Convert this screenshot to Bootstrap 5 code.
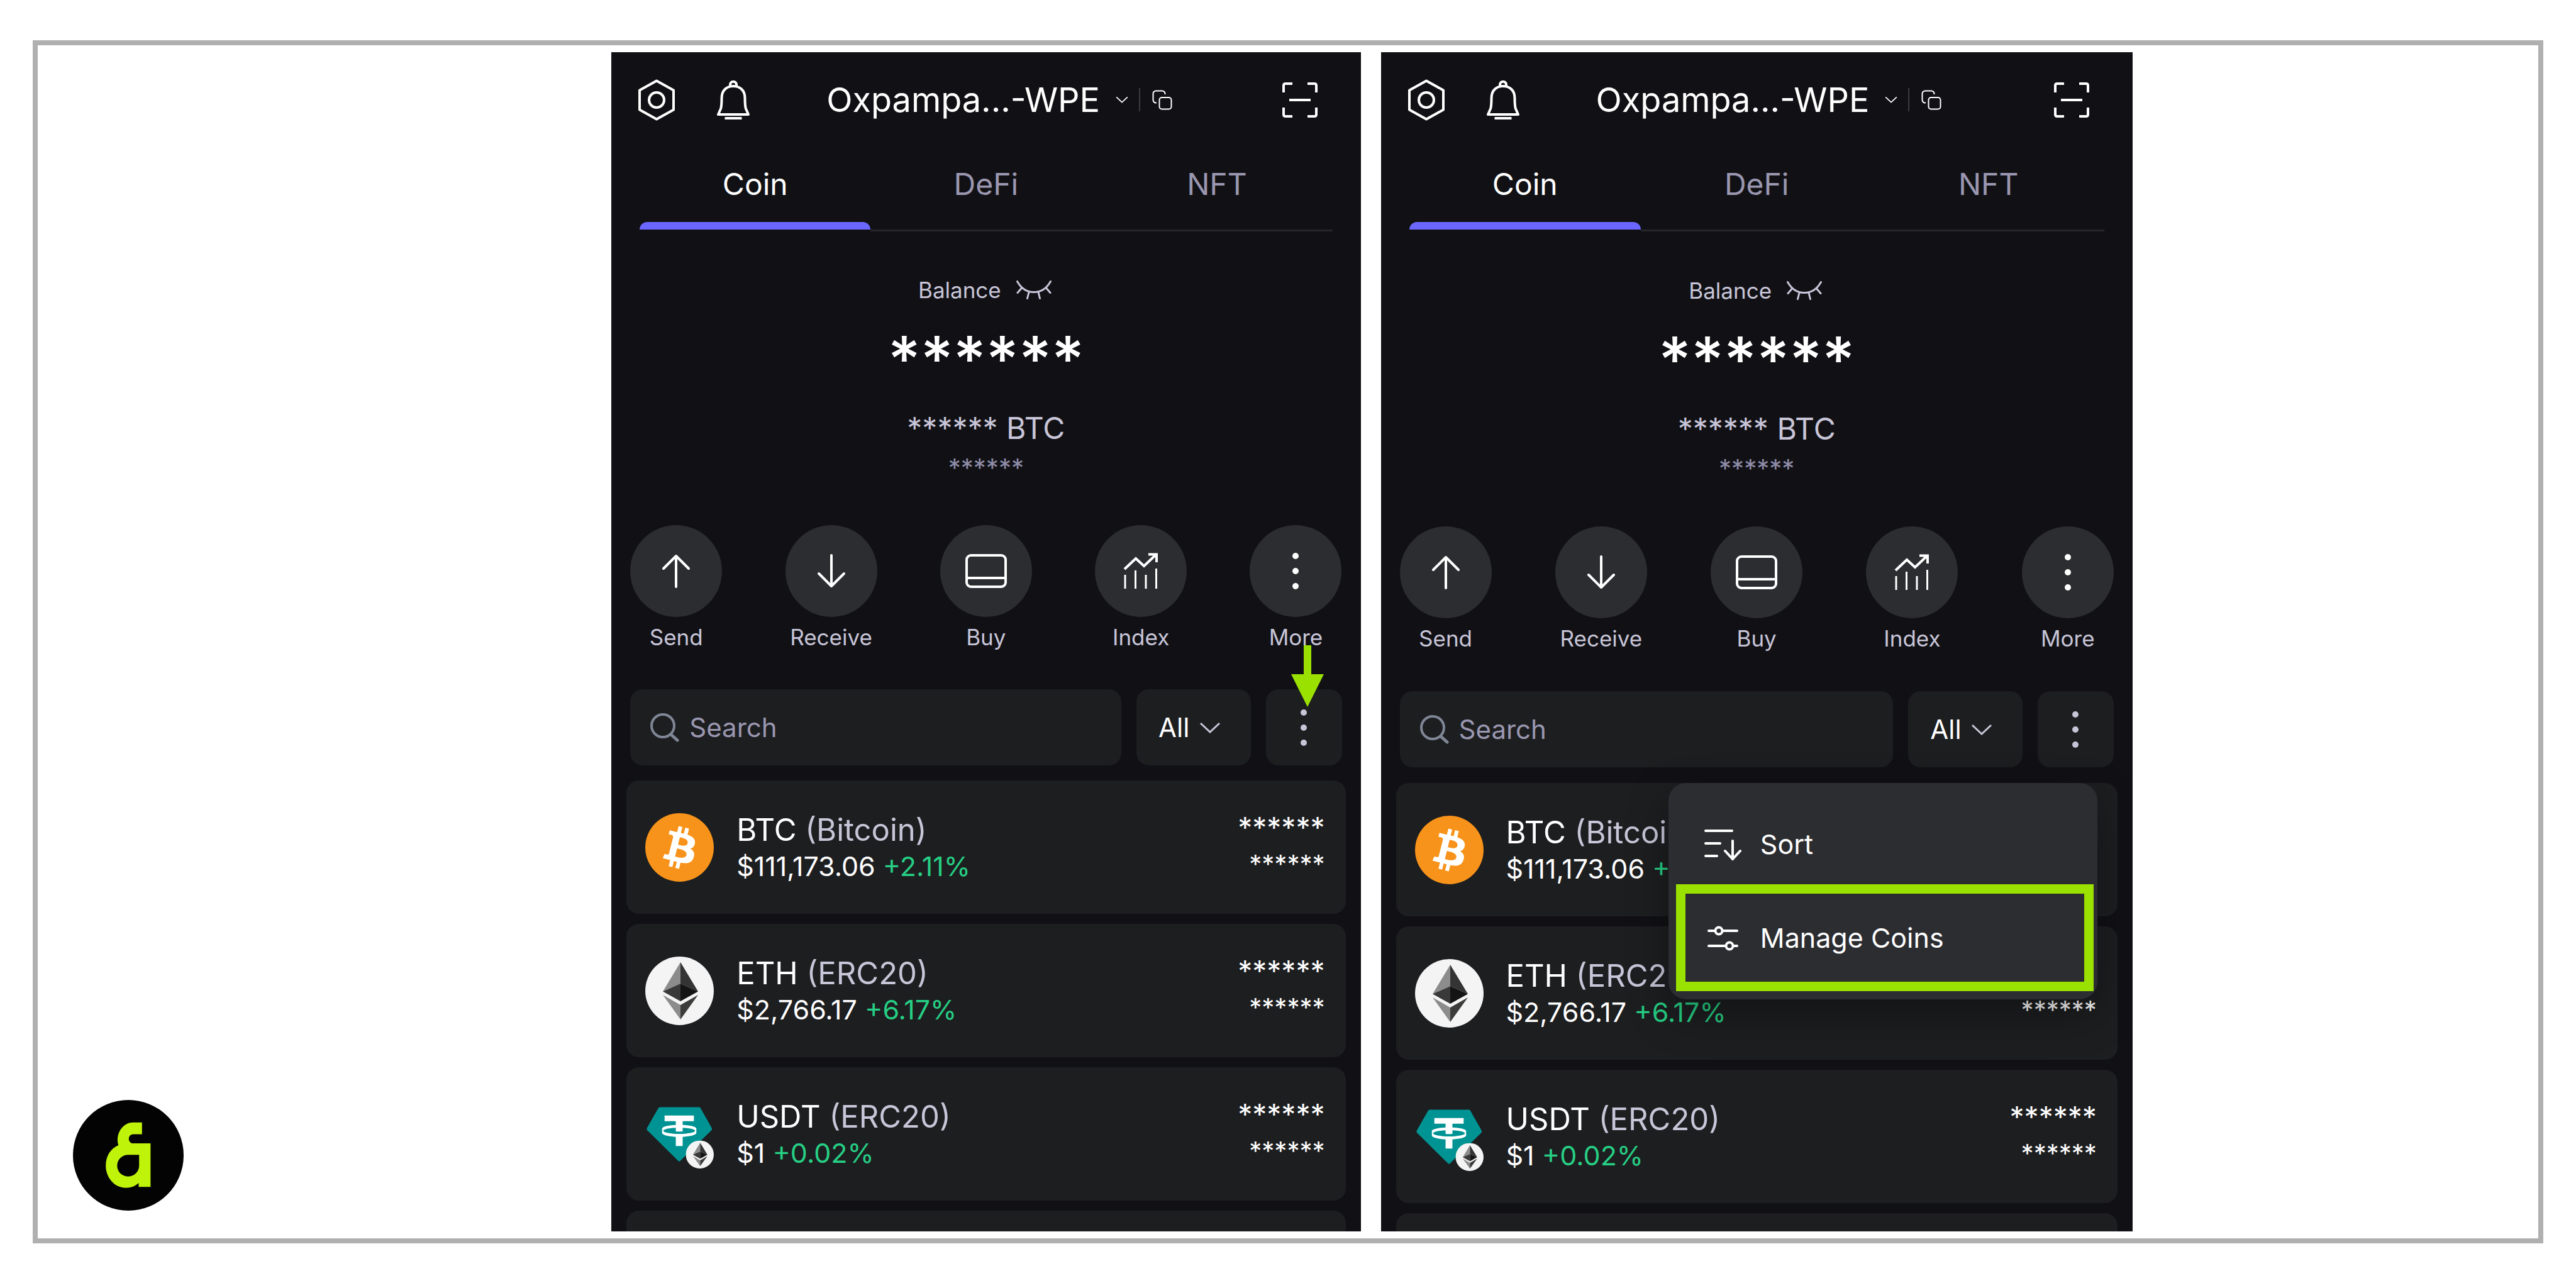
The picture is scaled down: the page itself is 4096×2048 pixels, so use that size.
<!DOCTYPE html>
<html lang="en">
<head>
<meta charset="utf-8">
<meta name="viewport" content="width=device-width, initial-scale=1">
<title>Wallet: manage coins</title>
<link href="https://cdn.jsdelivr.net/npm/bootstrap@5.3.0/dist/css/bootstrap.min.css" rel="stylesheet">
<style>
  body { background: #fff; font-family: Inter, "Liberation Sans", sans-serif; }
  svg { display: block; flex: none; fill: none; stroke: currentColor; stroke-width: 3; }
  .page { height: 100vh; padding: 64px 52px 71px; }
  .sheet { height: 100%; border: 8px solid #b0b0b0; padding: 11px 0; display: grid; grid-template-columns: 912fr 1191fr 32fr 1195fr 645fr; grid-template-rows: minmax(0, 1fr); }
  .brand { padding: 0 0 33px 56px; }
  .phone { --nudge: 0px; background: #111115; color: #fff; overflow: hidden; min-width: 0; }
  .phone-b { --nudge: 1px; grid-column: 4; }
  .phone button, .phone select, .phone input { background: none; border: 0; padding: 0; color: inherit; font-family: inherit; }
  .phone a { color: inherit; text-decoration: none; }

  .top-row { height: 151px; padding: 0 69px 0 42px; }
  .bell { margin-left: 66px; }
  .account { margin-left: 122px; gap: 25px; font-size: 54px; line-height: 64px; }
  .account-sep { width: 2px; height: 37px; background: #3a3b3f; margin: 0 -6px 0 -8px; }

  .tab-row { padding: 0 45px; font-size: 48px; line-height: 58px; }
  .tab-row a { flex: 1 1 0; text-align: center; padding: 30px 0 43px; border-bottom: 3px solid #26272b; color: #9a97b0; position: relative; }
  .tab-row a.active { color: #fff; border-color: transparent; }
  .tab-row a.active::after { content: ""; position: absolute; left: 0; right: 0; bottom: 0; height: 12px; border-radius: 12px 12px 0 0; background: #6b66ff; }

  .balance { padding-top: calc(72px + var(--nudge)); color: #c8c5d8; }
  .balance-label { gap: 24px; padding-right: 4px; font-size: 35px; line-height: 42px; }
  .total { margin-top: 26px; font-size: 100px; line-height: 126px; font-weight: 500; color: #fff; }
  .in-btc { margin-top: 18px; font-size: 48px; line-height: 58px; }
  .change { margin-top: 8px; font-size: 40px; line-height: 51px; color: #8f8ca8; }

  .actions { padding: calc(66px + var(--nudge)) 30px 0; }
  .action { width: 146px; font-size: 35px; line-height: 42px; color: #c8c5d8 !important; }
  .disc { width: 146px; height: 146px; border-radius: 50%; background: #2c2d31; color: #fff; margin-bottom: 11px; }

  .tools { padding: calc(62px + var(--nudge)) 30px 0; gap: 24px; font-size: 42px; line-height: 51px; }
  .tool { height: 121px; border-radius: 20px; background: #1d1e20; }
  .finder { padding: 0 32px; gap: 16px; color: #7f8796; }
  .finder input { width: 100%; outline: 0; }
  .finder input::placeholder { color: #9a97b0; opacity: 1; }
  .filter { width: 182px; gap: 15px; padding-right: 12px; }
  .filter select { appearance: none; color: #fff; font-size: 42px; line-height: 51px; }
  .soft { color: #c8c5d8; }
  .phone .kebab { width: 121px; background: #1d1e20; color: #c8c5d8; }

  .coins { padding: calc(24px + var(--nudge)) 24px 0; gap: 16px; }
  .coin { height: 212px; flex: none; padding: 0 33px 0 30px; border-radius: 20px; background: #1d1e20; }
  .coin-text { margin-left: 36px; }
  .name { font-size: 49px; line-height: 58px; margin-bottom: 3px; }
  .name span { color: #c8c5d8; }
  .price { font-size: 43px; line-height: 51px; }
  .price span { color: #26cf84; }
  .held { padding-bottom: 9px; }
  .held .name { font-size: 46px; }
  .held .price { font-size: 40px; }
  .coin svg { stroke: none; }

  .pick-menu { position: absolute; z-index: 5; top: calc(100% + 25px); right: 26px; width: 682px; padding: 23px 0; border: 0; border-radius: 28px; background: #2c2d31; box-shadow: 0 24px 64px rgba(0,0,0,.35); font-weight: 500; color: #fff; }
  .pick { position: relative; height: 149px; padding: 0 56px !important; gap: 28px; font-size: 43px; }
  .pick svg { width: 62px; }
  .pick-ring { position: absolute; inset: -11px 6px -10px 12px; border: 15px solid #9ae100; pointer-events: none; }
  .pointer { position: absolute; z-index: 5; left: 40px; top: -70px; stroke: none; fill: #9ae100; pointer-events: none; }
</style>
</head>
<body>

<svg width="0" height="0" class="position-absolute" aria-hidden="true">
  <symbol id="i-hex" viewBox="0 0 60 66"><path stroke-width="4" stroke-linejoin="round" d="M30 2.500 57 17.500V48.500L30 63.500 3 48.500V17.500Z"/><circle cx="30" cy="33" r="12" stroke-width="4"/></symbol>
  <symbol id="i-bell" viewBox="0 0 52 64"><path stroke-width="4" stroke-linejoin="round" d="M2 55H50L46 46C44.500 42 44.500 37 44.500 29 44.500 17 37 10 26 10S7.500 17 7.500 29C7.500 37 7.500 42 6 46Z M21 10V8C21 1 31 1 31 8V10 M12.500 61H39.500"/></symbol>
  <symbol id="i-down" viewBox="0 0 34 18"><path d="M2 2 17 16 32 2"/></symbol>
  <symbol id="i-copy" viewBox="0 0 32 32"><g stroke-width="2"><rect x="11.500" y="12" width="19" height="18.500" rx="4"/><path d="M7 20.500H6a4.500 4.500 0 0 1-4.500-4.500V6A4.500 4.500 0 0 1 6 1.500H16A4.500 4.500 0 0 1 20.500 6V7"/></g></symbol>
  <symbol id="i-scan" viewBox="0 0 56 56"><path stroke-width="4" d="M2 16V5Q2 2 5 2H16M40 2H51Q54 2 54 5V16M54 40V51Q54 54 51 54H40M16 54H5Q2 54 2 51V40M11 28H45"/></symbol>
  <symbol id="i-eye" viewBox="0 0 56 30"><path stroke-linecap="round" d="M1.500 1.500C8 13 17 18.500 28 18.500S48 13 54.500 1.500M8 12.500 2 19.500M48 12.500 54 19.500M20 18.500 17.500 28.500M35 18.500 37.500 28.500"/></symbol>
  <symbol id="i-up" viewBox="0 0 54 54"><path stroke-linecap="round" stroke-linejoin="round" stroke-width="4" d="M27 52V3M7 23 27 3 47 23"/></symbol>
  <symbol id="i-recv" viewBox="0 0 54 54"><path stroke-linecap="round" stroke-linejoin="round" stroke-width="4" d="M27 2V51M7 31 27 51 47 31"/></symbol>
  <symbol id="i-buy" viewBox="0 0 66 54"><rect x="2" y="2" width="62" height="50" rx="7" stroke-width="4"/><path stroke-width="4" d="M2 38H64"/></symbol>
  <symbol id="i-index" viewBox="0 0 56 58"><path d="M3 57V35M19.500 57V28M36 57V35M52.500 57V25"/><path stroke-width="4" d="M2 26 20 9 33 21 52 3M40 2.500H53V15"/></symbol>
  <symbol id="i-dots" viewBox="0 0 12 60"><g fill="currentColor" stroke="none"><circle cx="6" cy="6" r="5"/><circle cx="6" cy="30" r="5"/><circle cx="6" cy="54" r="5"/></g></symbol>
  <symbol id="i-find" viewBox="0 0 46 46"><circle cx="20" cy="20" r="18" stroke-width="4"/><path stroke-width="5" stroke-linecap="round" d="M33 34 43 43"/></symbol>
  <symbol id="i-sort" viewBox="0 0 62 50"><path stroke-width="4" stroke-linecap="round" d="M3 3H45M3 23H26M3 43H21M46 19V48"/><path stroke-width="4" stroke-linecap="round" stroke-linejoin="round" d="M34 35 46 48 58 35"/></symbol>
  <symbol id="i-sliders" viewBox="0 0 62 40"><g stroke-width="4" stroke-linecap="round"><path d="M8 8H18M30 8H53M8 32H35M47 32H53"/><circle cx="24" cy="8" r="5.500"/><circle cx="41" cy="32" r="5.500"/></g></symbol>
  <symbol id="c-btc" viewBox="0 0 32 32"><circle cx="16" cy="16" r="16" fill="#f7931a"/><path fill="#fff" d="M23.189 14.020c.314-2.096-1.283-3.223-3.465-3.975l.708-2.840-1.728-.430-.690 2.765c-.454-.114-.920-.220-1.385-.326l.695-2.783L15.596 6l-.708 2.839c-.376-.086-.746-.170-1.104-.260l.002-.009-2.384-.595-.460 1.846s1.283.294 1.256.312c.700.175.826.638.805 1.006l-.806 3.235c.048.012.110.030.180.057l-.183-.045-1.130 4.532c-.086.212-.303.531-.793.410.018.025-1.256-.313-1.256-.313l-.858 1.978 2.250.561c.418.105.828.215 1.231.318l-.715 2.872 1.727.430.708-2.840c.472.127.930.245 1.378.357l-.706 2.828 1.728.430.715-2.866c2.948.558 5.164.333 6.097-2.333.752-2.146-.037-3.385-1.588-4.192 1.130-.260 1.980-1.003 2.207-2.538zm-3.950 5.538c-.533 2.147-4.148.986-5.320.695l.950-3.805c1.172.293 4.929.872 4.370 3.110zm.535-5.569c-.487 1.953-3.495.960-4.470.717l.860-3.450c.975.243 4.118.696 3.610 2.733z"/></symbol>
  <symbol id="c-eth" viewBox="0 0 109 109"><circle cx="54.500" cy="54.500" r="54.500" fill="#f4f4f4"/><path fill="#8c8c8c" d="M56 9 28 55.500 56 43ZM28 61 56 77V100Z"/><path fill="#343434" d="M56 9 84 55.500 56 43Z"/><path fill="#393939" d="M56 43 28 55.500 56 71Z"/><path fill="#141414" d="M56 43 84 55.500 56 71Z"/><path fill="#3c3c3b" d="M84 61 56 77V100Z"/></symbol>
  <symbol id="c-usdt" viewBox="0 0 110 110"><path fill="#009393" d="M24 11.500H86.500Q88 11.500 88.700 13L106.700 45Q107.500 47 106.500 48.500L56 98Q54.500 99.500 53 98L3 48.500Q2 47 2.800 45L21 13Q22 11.500 24 11.500Z"/><path fill="#fff" d="M31 25H78V34H60V40.200C73 40.700 82 43 82 46V53C82 56 73 58.500 60 59.200V74H49V59.200C36 58.500 27 56 27 53V46C27 43 36 40.700 49 40.200V34H31Z"/><ellipse cx="54.500" cy="49.500" rx="25.500" ry="5" fill="#009393"/><path fill="#fff" d="M49 40H60V50.500Q54.500 51 49 50.500Z"/></symbol>
</svg>

<main class="page">
<div class="sheet">
  <aside class="brand d-flex align-items-end">
    <svg width="176" height="176" viewBox="0 0 176 176" role="img" aria-label="Logo"><g stroke="none"><circle cx="88" cy="88" r="88" fill="#030303"/><path fill="#c0f30a" fill-rule="evenodd" d="M109.800 35.800V54.400H96C86.500 54.400 86.500 69 96 69H123.400V138.200H104.500V132C99 137 92.500 139.700 84.400 139.700 66 139.700 52.200 124 52.200 104.300 52.200 89 60 77 72.300 72 67 54 79 35.800 95.700 35.800ZM87.800 87.300C78 87.300 70.300 95 70.300 104.600S78 121.700 87.800 121.700 105.200 114 105.200 104.600V87.300Z"/></g></svg>
  </aside>

  <section class="phone phone-a" aria-label="Wallet home">
    <header class="top-row d-flex align-items-center">
      <button type="button" aria-label="Settings"><svg width="60" height="66"><use href="#i-hex"/></svg></button>
      <button type="button" class="bell" aria-label="Notifications"><svg width="52" height="64"><use href="#i-bell"/></svg></button>
      <div class="account d-flex align-items-center">
        <span>Oxpampa...-WPE</span>
        <svg width="20" height="11"><use href="#i-down"/></svg>
        <span class="account-sep"></span>
        <button type="button" aria-label="Copy"><svg width="32" height="32"><use href="#i-copy"/></svg></button>
      </div>
      <button type="button" class="ms-auto" aria-label="Scan"><svg width="56" height="56"><use href="#i-scan"/></svg></button>
    </header>
    <nav class="tab-row d-flex"><a href="#coin" class="active">Coin</a><a href="#defi">DeFi</a><a href="#nft">NFT</a></nav>
    <div class="balance d-flex flex-column align-items-center">
      <div class="balance-label d-flex align-items-center"><span>Balance</span><svg width="56" height="30"><use href="#i-eye"/></svg></div>
      <div class="total">******</div>
      <div class="in-btc">****** BTC</div>
      <div class="change">******</div>
    </div>
    <div class="actions d-flex justify-content-between">
      <a href="#send" class="action text-center"><span class="disc d-flex align-items-center justify-content-center"><svg width="54" height="54"><use href="#i-up"/></svg></span>Send</a>
      <a href="#receive" class="action text-center"><span class="disc d-flex align-items-center justify-content-center"><svg width="54" height="54"><use href="#i-recv"/></svg></span>Receive</a>
      <a href="#buy" class="action text-center"><span class="disc d-flex align-items-center justify-content-center"><svg width="66" height="54"><use href="#i-buy"/></svg></span>Buy</a>
      <a href="#index" class="action text-center"><span class="disc d-flex align-items-center justify-content-center"><svg width="56" height="58"><use href="#i-index"/></svg></span>Index</a>
      <a href="#more" class="action text-center"><span class="disc d-flex align-items-center justify-content-center"><svg width="12" height="60"><use href="#i-dots"/></svg></span>More</a>
    </div>
    <div class="tools d-flex">
      <label class="tool finder d-flex align-items-center flex-grow-1"><svg width="46" height="46"><use href="#i-find"/></svg><input type="search" placeholder="Search" aria-label="Search"></label>
      <label class="tool filter d-flex align-items-center justify-content-center"><select aria-label="Filter"><option>All</option></select><svg class="soft" width="34" height="18"><use href="#i-down"/></svg></label>
      <div class="position-relative">
        <button type="button" class="tool kebab d-flex align-items-center justify-content-center" aria-label="List options"><svg width="12" height="60"><use href="#i-dots"/></svg></button>
        <svg class="pointer" width="52" height="98" viewBox="0 0 52 98" aria-hidden="true"><path d="M20 0H32V46H52L26 98 0 46H20Z"/></svg>
      </div>
    </div>
    <div class="coins d-flex flex-column">
      <article class="coin d-flex align-items-center"><svg width="109" height="109"><use href="#c-btc"/></svg><div class="coin-text"><div class="name">BTC <span>(Bitcoin)</span></div><div class="price">$111,173.06 <span>+2.11%</span></div></div><div class="held ms-auto text-end"><div class="name">******</div><div class="price">******</div></div></article>
      <article class="coin d-flex align-items-center"><svg width="109" height="109"><use href="#c-eth"/></svg><div class="coin-text"><div class="name">ETH <span>(ERC20)</span></div><div class="price">$2,766.17 <span>+6.17%</span></div></div><div class="held ms-auto text-end"><div class="name">******</div><div class="price">******</div></div></article>
      <article class="coin d-flex align-items-center"><svg width="109" height="109" viewBox="0 0 110 110"><use href="#c-usdt" width="110" height="110"/><use href="#c-eth" x="65" y="65" width="45" height="45"/></svg><div class="coin-text"><div class="name">USDT <span>(ERC20)</span></div><div class="price">$1 <span>+0.02%</span></div></div><div class="held ms-auto text-end"><div class="name">******</div><div class="price">******</div></div></article>
      <article class="coin"></article>
    </div>
  </section>

  <section class="phone phone-b" aria-label="Wallet home with the list menu open">
    <header class="top-row d-flex align-items-center">
      <button type="button" aria-label="Settings"><svg width="60" height="66"><use href="#i-hex"/></svg></button>
      <button type="button" class="bell" aria-label="Notifications"><svg width="52" height="64"><use href="#i-bell"/></svg></button>
      <div class="account d-flex align-items-center">
        <span>Oxpampa...-WPE</span>
        <svg width="20" height="11"><use href="#i-down"/></svg>
        <span class="account-sep"></span>
        <button type="button" aria-label="Copy"><svg width="32" height="32"><use href="#i-copy"/></svg></button>
      </div>
      <button type="button" class="ms-auto" aria-label="Scan"><svg width="56" height="56"><use href="#i-scan"/></svg></button>
    </header>
    <nav class="tab-row d-flex"><a href="#coin" class="active">Coin</a><a href="#defi">DeFi</a><a href="#nft">NFT</a></nav>
    <div class="balance d-flex flex-column align-items-center">
      <div class="balance-label d-flex align-items-center"><span>Balance</span><svg width="56" height="30"><use href="#i-eye"/></svg></div>
      <div class="total">******</div>
      <div class="in-btc">****** BTC</div>
      <div class="change">******</div>
    </div>
    <div class="actions d-flex justify-content-between">
      <a href="#send" class="action text-center"><span class="disc d-flex align-items-center justify-content-center"><svg width="54" height="54"><use href="#i-up"/></svg></span>Send</a>
      <a href="#receive" class="action text-center"><span class="disc d-flex align-items-center justify-content-center"><svg width="54" height="54"><use href="#i-recv"/></svg></span>Receive</a>
      <a href="#buy" class="action text-center"><span class="disc d-flex align-items-center justify-content-center"><svg width="66" height="54"><use href="#i-buy"/></svg></span>Buy</a>
      <a href="#index" class="action text-center"><span class="disc d-flex align-items-center justify-content-center"><svg width="56" height="58"><use href="#i-index"/></svg></span>Index</a>
      <a href="#more" class="action text-center"><span class="disc d-flex align-items-center justify-content-center"><svg width="12" height="60"><use href="#i-dots"/></svg></span>More</a>
    </div>
    <div class="tools d-flex">
      <label class="tool finder d-flex align-items-center flex-grow-1"><svg width="46" height="46"><use href="#i-find"/></svg><input type="search" placeholder="Search" aria-label="Search"></label>
      <label class="tool filter d-flex align-items-center justify-content-center"><select aria-label="Filter"><option>All</option></select><svg class="soft" width="34" height="18"><use href="#i-down"/></svg></label>
      <div class="position-relative">
        <button type="button" class="tool kebab d-flex align-items-center justify-content-center" aria-label="List options" aria-expanded="true"><svg width="12" height="60"><use href="#i-dots"/></svg></button>
        <div class="pick-menu">
          <button type="button" class="pick d-flex align-items-center w-100"><svg height="50"><use href="#i-sort"/></svg>Sort</button>
          <button type="button" class="pick d-flex align-items-center w-100"><svg height="40"><use href="#i-sliders"/></svg>Manage Coins<span class="pick-ring"></span></button>
        </div>
      </div>
    </div>
    <div class="coins d-flex flex-column">
      <article class="coin d-flex align-items-center"><svg width="109" height="109"><use href="#c-btc"/></svg><div class="coin-text"><div class="name">BTC <span>(Bitcoin)</span></div><div class="price">$111,173.06 <span>+2.11%</span></div></div><div class="held ms-auto text-end"><div class="name">******</div><div class="price">******</div></div></article>
      <article class="coin d-flex align-items-center"><svg width="109" height="109"><use href="#c-eth"/></svg><div class="coin-text"><div class="name">ETH <span>(ERC20)</span></div><div class="price">$2,766.17 <span>+6.17%</span></div></div><div class="held ms-auto text-end"><div class="name">******</div><div class="price">******</div></div></article>
      <article class="coin d-flex align-items-center"><svg width="109" height="109" viewBox="0 0 110 110"><use href="#c-usdt" width="110" height="110"/><use href="#c-eth" x="65" y="65" width="45" height="45"/></svg><div class="coin-text"><div class="name">USDT <span>(ERC20)</span></div><div class="price">$1 <span>+0.02%</span></div></div><div class="held ms-auto text-end"><div class="name">******</div><div class="price">******</div></div></article>
      <article class="coin"></article>
    </div>
  </section>
</div>
</main>
<script src="https://cdn.jsdelivr.net/npm/bootstrap@5.3.0/dist/js/bootstrap.bundle.min.js"></script>
</body>
</html>
